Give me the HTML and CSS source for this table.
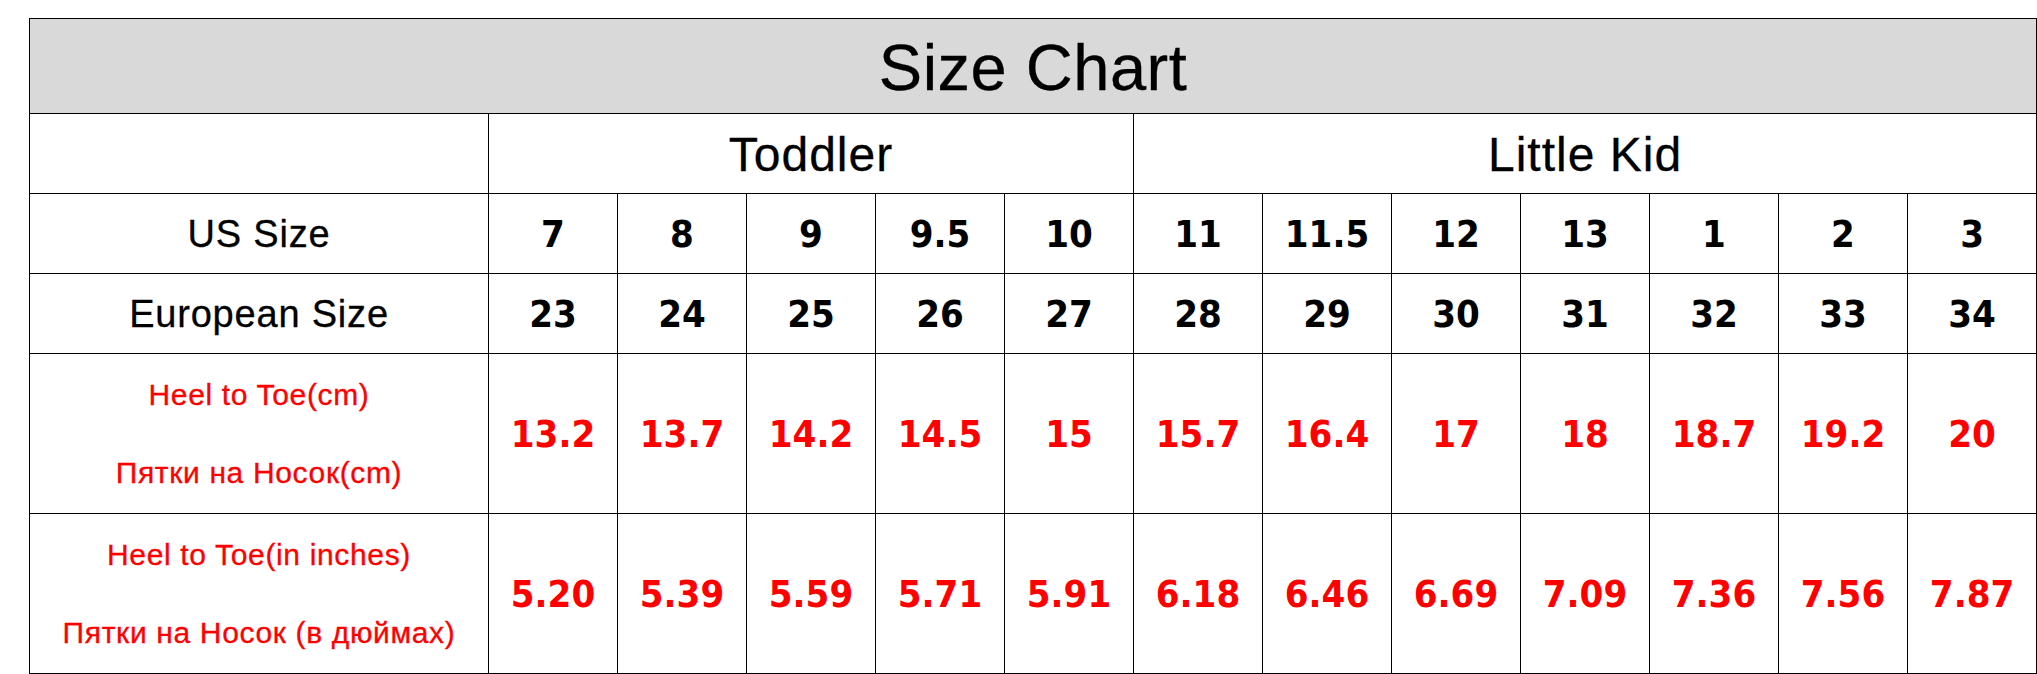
FILE: index.html
```html
<!DOCTYPE html>
<html lang="en">
<head>
<meta charset="utf-8">
<title>Size Chart</title>
<link rel="stylesheet" href="styles.css">
</head>
<body>
<table class="chart">
  <colgroup>
    <col class="col-label">
    <col class="col-data" span="12">
  </colgroup>
  <tr class="row-title">
    <th colspan="13" class="title">Size Chart</th>
  </tr>
  <tr class="row-group">
    <td></td>
    <th colspan="5" class="group">Toddler</th>
    <th colspan="7" class="group">Little Kid</th>
  </tr>
  <tr class="row-size">
    <th class="label">US Size</th>
    <td class="num">7</td><td class="num">8</td><td class="num">9</td><td class="num">9.5</td><td class="num">10</td>
    <td class="num">11</td><td class="num">11.5</td><td class="num">12</td><td class="num">13</td><td class="num">1</td><td class="num">2</td><td class="num">3</td>
  </tr>
  <tr class="row-size">
    <th class="label">European Size</th>
    <td class="num">23</td><td class="num">24</td><td class="num">25</td><td class="num">26</td><td class="num">27</td>
    <td class="num">28</td><td class="num">29</td><td class="num">30</td><td class="num">31</td><td class="num">32</td><td class="num">33</td><td class="num">34</td>
  </tr>
  <tr class="row-measure">
    <th class="label-red"><div class="pair"><span>Heel to Toe(cm)</span><span>Пятки на Носок(cm)</span></div></th>
    <td class="num red">13.2</td><td class="num red">13.7</td><td class="num red">14.2</td><td class="num red">14.5</td><td class="num red">15</td>
    <td class="num red">15.7</td><td class="num red">16.4</td><td class="num red">17</td><td class="num red">18</td><td class="num red">18.7</td><td class="num red">19.2</td><td class="num red">20</td>
  </tr>
  <tr class="row-measure">
    <th class="label-red"><div class="pair"><span>Heel to Toe(in inches)</span><span>Пятки на Носок (в дюймах)</span></div></th>
    <td class="num red">5.20</td><td class="num red">5.39</td><td class="num red">5.59</td><td class="num red">5.71</td><td class="num red">5.91</td>
    <td class="num red">6.18</td><td class="num red">6.46</td><td class="num red">6.69</td><td class="num red">7.09</td><td class="num red">7.36</td><td class="num red">7.56</td><td class="num red">7.87</td>
  </tr>
</table>
</body>
</html>
```

FILE: styles.css
```css
html, body {
  margin: 0;
  padding: 0;
  background: #ffffff;
}

body {
  padding: 18px 0 0 29px;
  font-family: "Liberation Sans", Arial, sans-serif;
  color: #000000;
}

.chart {
  table-layout: fixed;
  width: 2008px;
  border-collapse: separate;
  border-spacing: 1px;
  background: #000000;
}

.col-label { width: 458px; }
.col-data { width: 128px; }

.chart th,
.chart td {
  padding: 0;
  background: #ffffff;
  text-align: center;
  vertical-align: middle;
  font-weight: normal;
  line-height: 1;
}

.row-title { height: 94px; }
.row-group,
.row-size { height: 79px; }
.row-measure { height: 159px; }

.chart .title,
.chart .group,
.chart .label,
.chart .label-red {
  -webkit-text-stroke: 0.3px currentColor;
}

.chart .title {
  background: #d9d9d9;
  font-size: 65px;
  letter-spacing: 0.5px;
  padding-top: 2px;
}

.chart .group {
  font-size: 48px;
  letter-spacing: 1px;
  padding-top: 2px;
}

.chart .label {
  font-size: 38px;
  letter-spacing: 0.8px;
  padding-top: 1px;
}

.chart .num {
  font-family: "DejaVu Sans Condensed", "DejaVu Sans", sans-serif;
  font-stretch: condensed;
  font-weight: bold;
  font-size: 38px;
  color: #000000;
}

.chart .num.red {
  color: #ff0000;
}

.chart .label-red {
  color: #ff0000;
  font-size: 30px;
  letter-spacing: 0.65px;
}

.pair {
  display: flex;
  flex-direction: column;
  align-items: center;
  gap: 44px;
  line-height: 34px;
}
```
